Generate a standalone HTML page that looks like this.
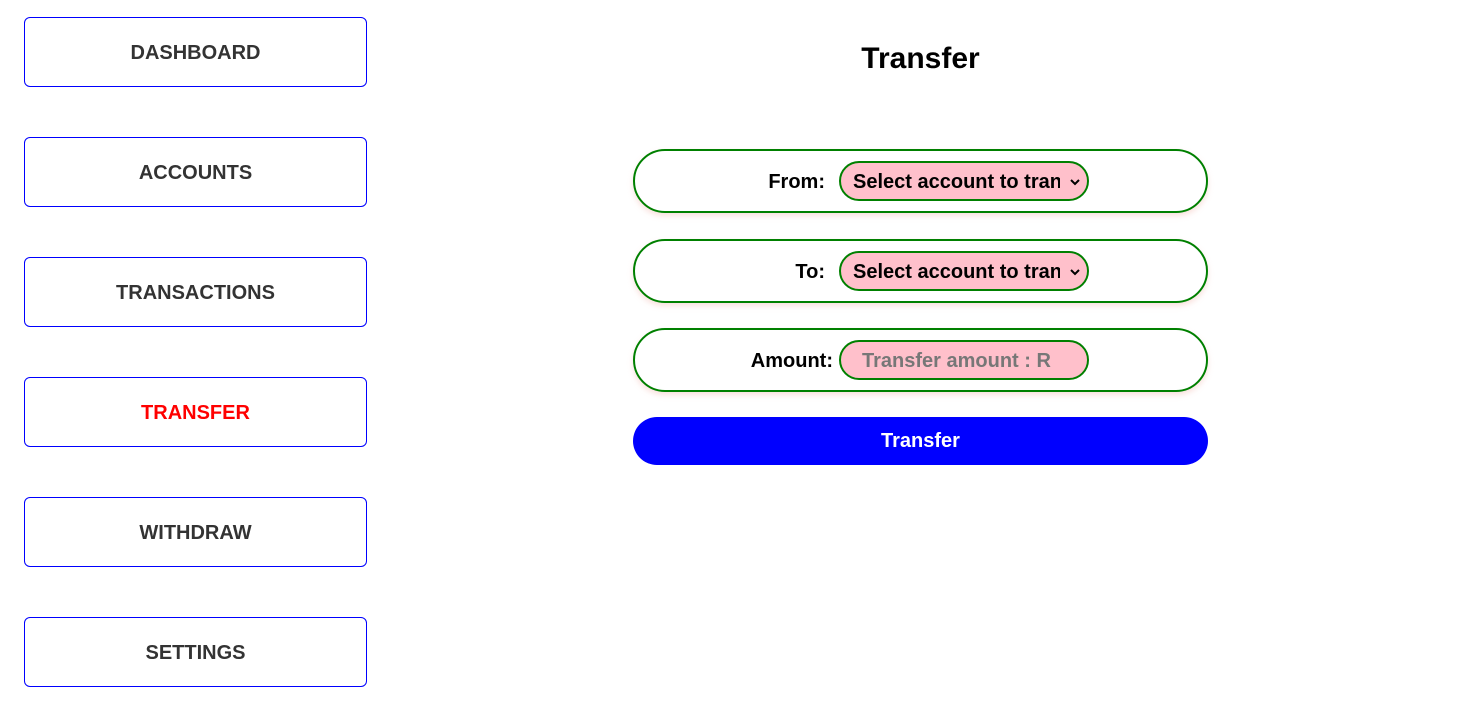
<!DOCTYPE html>
<html><head><style>
body{margin:0;width:1458px;height:702px;background:#fff;font-family:"Liberation Sans",Arial,sans-serif;position:relative;overflow:hidden}
.nav{position:absolute;left:24px;width:341px;height:68px;border:1px solid #00f;border-radius:6px;display:flex;align-items:center;justify-content:center;font-weight:bold;font-size:20px;color:#333;padding-top:2px;box-sizing:content-box;height:66px}
h1{position:absolute;left:633px;width:575px;top:42px;margin:0;text-align:center;font-size:30px;font-weight:bold;color:#000}
.row{position:absolute;left:633px;width:571px;height:60px;border:2px solid green;border-radius:32px;box-shadow:0 3px 6px rgba(240,180,170,.4)}
.lab{position:absolute;right:381px;top:1px;line-height:60px;font-weight:bold;font-size:20px;color:#000}
.sel{position:absolute;left:204px;top:10px;width:246px;height:36px;border:2px solid green;border-radius:20px;background:pink;font-weight:bold;font-size:20px;line-height:38px;overflow:hidden;white-space:nowrap}
.sel span{position:absolute;top:0;overflow:hidden}
.btn{position:absolute;left:633px;top:417px;width:575px;height:48px;border-radius:24px;background:#00f;color:#fff;font-weight:bold;font-size:20px;text-align:center;line-height:48px}
</style></head><body>
<div class="nav" style="top:17px">DASHBOARD</div>
<div class="nav" style="top:137px">ACCOUNTS</div>
<div class="nav" style="top:257px">TRANSACTIONS</div>
<div class="nav" style="top:377px;color:#f00">TRANSFER</div>
<div class="nav" style="top:497px">WITHDRAW</div>
<div class="nav" style="top:617px">SETTINGS</div>
<h1>Transfer</h1>
<div class="row" style="top:149px"><span class="lab">From:</span><div class="sel"><span style="left:12px;width:207px">Select account to transfer</span><svg style="position:absolute;right:7px;top:16px" width="10" height="7" viewBox="0 0 10 7"><path d="M1 1l4 4 4-4" fill="none" stroke="#000" stroke-width="2"/></svg></div></div>
<div class="row" style="top:239px"><span class="lab">To:</span><div class="sel"><span style="left:12px;width:207px">Select account to transfer</span><svg style="position:absolute;right:7px;top:16px" width="10" height="7" viewBox="0 0 10 7"><path d="M1 1l4 4 4-4" fill="none" stroke="#000" stroke-width="2"/></svg></div></div>
<div class="row" style="top:328px"><span class="lab" style="right:373px">Amount:</span><div class="sel" style="color:#777"><span style="left:21px">Transfer amount : R</span></div></div>
<div class="btn">Transfer</div>
</body></html>
